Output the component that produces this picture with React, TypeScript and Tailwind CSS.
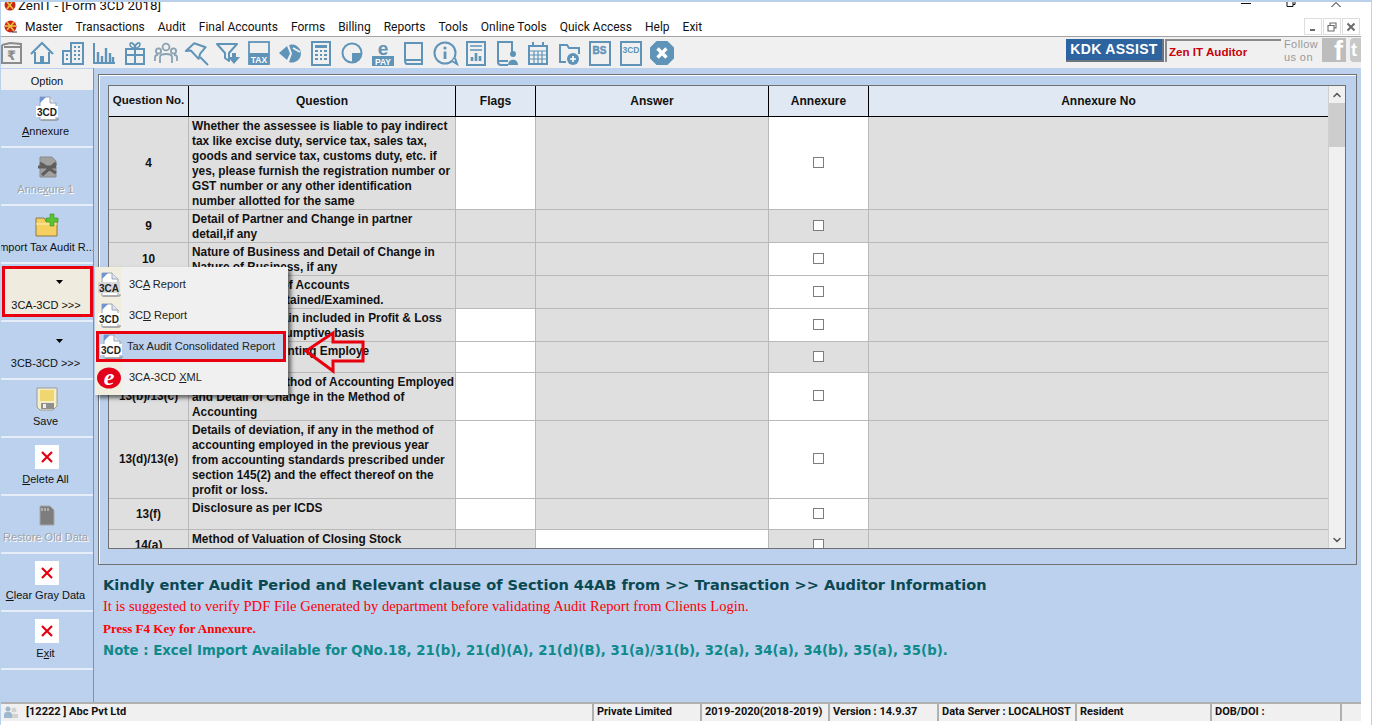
import React from "react";
import { ChevronDown, ChevronUp } from "lucide-react";

const BLUE = "#5f94b8";

const Ico = ({ children, w = 24 }: { children: React.ReactNode; w?: number }) => (
  <svg width={w} height="26" viewBox={`0 0 ${w} 26`} fill="none" stroke={BLUE} strokeWidth="2" className="shrink-0 overflow-visible">
    {children}
  </svg>
);

const toolbarIcons: React.ReactNode[] = [
  <Ico w={22} key="wallet">
    <path d="M1 5 L9 3 L20 4 V7 M1 5 V23 H20 V7 H3" stroke="#8b8b8b" />
    <text x="6" y="20" fontSize="13" fontWeight="700" fill="#8b8b8b" stroke="none" fontFamily="DejaVu Sans">₹</text>
  </Ico>,
  <Ico key="home">
    <path d="M1 14 L12 3 L23 14" />
    <path d="M5 12 V23 H19 V12" />
    <rect x="10" y="16" width="4" height="7" fill={BLUE} stroke="none" />
  </Ico>,
  <Ico key="building">
    <rect x="10" y="3" width="12" height="21" />
    <rect x="2" y="11" width="8" height="13" />
    <path d="M13 7h2M17 7h2M13 11h2M17 11h2M13 15h2M17 15h2M13 19h2M17 19h2M5 15h2M5 19h2" />
  </Ico>,
  <Ico key="bars">
    <path d="M2 3 V23 H23" />
    <path d="M6 12 V22M10 16 V22M14 8 V22M18 13 V22M21 17 V22" strokeWidth="2.4" />
  </Ico>,
  <Ico key="gift">
    <rect x="3" y="9" width="18" height="15" />
    <path d="M3 15 H21 M12 9 V24" />
    <path d="M12 8 C6 8 6 2 9 3 C11 4 12 6 12 8 C12 6 13 4 15 3 C18 2 18 8 12 8 Z" strokeWidth="1.6" />
  </Ico>,
  <Ico key="users">
    <g stroke="#8aa2b2" strokeWidth="1.8">
      <circle cx="12" cy="7" r="3.4" />
      <circle cx="4.5" cy="11" r="2.6" />
      <circle cx="19.5" cy="11" r="2.6" />
      <path d="M6 23 V17 C6 13 18 13 18 17 V23" />
      <path d="M1 21 V17 C1 15 3 15 4 15 M23 21 V17 C23 15 21 15 20 15" />
    </g>
  </Ico>,
  <Ico key="pin">
    <path d="M10 3 L1 10 L6 10 L13 19 L15 14 L21 8 Z" strokeLinejoin="round" transform="rotate(-5 12 12)" />
    <path d="M15 17 L23 25" />
  </Ico>,
  <Ico key="filter">
    <path d="M1 4 H21 L13 13 V21 L9 18 V13 Z" strokeLinejoin="round" />
    <path d="M16 13 h4 v4 h4 l-6 7 l-6 -7 h4 Z" fill={BLUE} stroke="none" />
  </Ico>,
  <Ico key="tax">
    <rect x="2" y="2" width="20" height="22" strokeWidth="1.8" />
    <rect x="2" y="13" width="20" height="12" fill={BLUE} stroke="none" />
    <text x="12" y="23" textAnchor="middle" fontSize="8.5" fontWeight="700" fill="#fff" stroke="none" fontFamily="Liberation Sans">TAX</text>
  </Ico>,
  <Ico key="pie">
    <path d="M11 5 A9 9 0 1 1 11 22 L14 13.5 Z" fill={BLUE} stroke="none" />
    <path d="M9 6 L1 13 L9 20 L12 13.5 Z" fill={BLUE} stroke="none" />
    <path d="M15 8 L22 12" stroke="#f0f0f0" />
  </Ico>,
  <Ico key="calc">
    <rect x="3" y="2" width="18" height="23" />
    <rect x="6" y="5" width="12" height="3" fill={BLUE} stroke="none" />
    <path d="M6 11h3M11 11h2M15 11h3M6 15h3M11 15h2M15 15h3M6 19h3M11 19h2M15 19h3" />
  </Ico>,
  <Ico key="circle-pie">
    <circle cx="12" cy="13" r="9.5" />
    <path d="M12 13 V22 A9.5 9.5 0 0 0 21.5 13 Z" fill={BLUE} stroke="none" />
  </Ico>,
  <Ico key="epay">
    <text x="12" y="15" textAnchor="middle" fontSize="19" fontWeight="700" fill={BLUE} stroke="none" fontFamily="Liberation Sans">e</text>
    <rect x="1" y="16" width="22" height="10" fill={BLUE} stroke="none" />
    <text x="12" y="24.5" textAnchor="middle" fontSize="8.5" fontWeight="700" fill="#fff" stroke="none" fontFamily="Liberation Sans">PAY</text>
  </Ico>,
  <Ico key="book">
    <path d="M5 24 C3 24 3 21 3 20 V3 H20 V24 Z" />
    <path d="M3 20 H20" />
  </Ico>,
  <Ico key="info">
    <circle cx="12" cy="13" r="10.5" />
    <path d="M19 21 L24 24 L22 18" fill="#f0f0f0" />
    <circle cx="12" cy="8" r="1.6" fill={BLUE} stroke="none" />
    <path d="M12 11.5 V19" strokeWidth="2.8" />
  </Ico>,
  <Ico key="report">
    <rect x="3" y="2" width="18" height="23" />
    <path d="M6 6 H18 M6 10 H18" strokeWidth="1.6" />
    <path d="M8 21 V17 M12 21 V13 M16 21 V16" strokeWidth="2.6" />
  </Ico>,
  <Ico key="book-user">
    <path d="M17 14 V2 H3 V22 C3 24 4 25 6 25 H13" />
    <path d="M3 21 H13" />
    <circle cx="18" cy="14" r="3" fill={BLUE} stroke="none" />
    <path d="M13 25 C13 18 23 18 23 25 Z" fill={BLUE} stroke="none" />
  </Ico>,
  <Ico key="calendar">
    <rect x="3" y="6" width="18" height="18" />
    <path d="M7 2 V7 M17 2 V7" />
    <path d="M3 11 H21 M3 15 H21 M3 19 H21 M8 11 V24 M12 11 V24 M16 11 V24" strokeWidth="1.2" />
  </Ico>,
  <Ico key="folder-plus">
    <path d="M9 22 H3 V5 H10 L12 8 H22 V14" />
    <circle cx="16" cy="19" r="6" fill={BLUE} stroke="none" />
    <path d="M13 19 H19 M16 16 V22" stroke="#fff" strokeWidth="1.6" />
  </Ico>,
  <Ico key="bs">
    <rect x="2" y="2" width="20" height="23" />
    <text x="11.5" y="14" textAnchor="middle" fontSize="10" fontWeight="700" fill={BLUE} stroke="#5f94b8" strokeWidth=".4" fontFamily="Liberation Sans">BS</text>
  </Ico>,
  <Ico key="3cd">
    <rect x="2" y="2" width="20" height="23" />
    <text x="12" y="13" textAnchor="middle" fontSize="8.5" fontWeight="700" fill={BLUE} stroke="none" fontFamily="Liberation Sans">3CD</text>
  </Ico>,
  <Ico key="close">
    <path d="M7 2 H17 L23 8 V18 L17 24 H7 L1 18 V8 Z" fill={BLUE} stroke={BLUE} strokeLinejoin="round" />
    <path d="M7.5 8.5 L16.5 17.5 M16.5 8.5 L7.5 17.5" stroke="#fff" strokeWidth="3.4" />
  </Ico>,
];

const menus = ["Master", "Transactions", "Audit", "Final Accounts", "Forms", "Billing", "Reports", "Tools", "Online Tools", "Quick Access", "Help", "Exit"];

type Row = {
  no: string;
  q: string;
  h: string;
  flags?: boolean;
  answer?: boolean;
  annexure?: boolean;
};

const rows: Row[] = [
  {
    no: "4",
    q: "Whether the assessee is liable to pay indirect tax like excise duty, service tax, sales tax, goods and service tax, customs duty, etc. if yes, please furnish the registration number or GST number or any other identification number allotted for the same",
    h: "h-[93px]",
    flags: true,
    annexure: true,
  },
  { no: "9", q: "Detail of Partner and Change in partner detail,if any", h: "h-[33px]" },
  { no: "10", q: "Nature of Business and Detail of Change in Nature of Business, if any", h: "h-[33px]", annexure: true },
  { no: "11", q: "Detail of Books of Accounts\nand Papers Maintained/Examined.", h: "h-[33px]", annexure: true },
  { no: "12", q: "Detail of Total Gain included in Profit & Loss\nAccount on presumptive basis", h: "h-[33px]", flags: true, annexure: true },
  { no: "13(a)", q: "Method of Accounting Employe", h: "h-[31px]", flags: true },
  { no: "13(b)/13(c)", q: "Details of the Method of Accounting Employed and Detail of Change in the Method of Accounting", h: "h-[48px]", flags: true, annexure: true },
  {
    no: "13(d)/13(e)",
    q: "Details of deviation, if any in the method of accounting employed in the previous year from accounting standards prescribed under section 145(2) and the effect thereof on the profit or loss.",
    h: "h-[78px]",
    flags: true,
    annexure: true,
  },
  { no: "13(f)", q: "Disclosure as per ICDS", h: "h-[31px]", flags: true, annexure: true },
  { no: "14(a)", q: "Method of Valuation of Closing Stock", h: "h-[31px]", answer: true },
];

const DocIcon = ({ label = "3CD", shade = "#fff" }: { label?: string; shade?: string }) => (
  <svg width="24" height="26" viewBox="0 0 24 26" className="shrink-0">
    <path d="M5 1 H15 L21 7 V24 H5 Z" fill="#fff" stroke="#9aa3b5" />
    <path d="M5 1 L5 7 L11 1 Z" fill="#6f93d6" />
    <path d="M15 1 V7 H21" fill="#dfe5f0" stroke="#9aa3b5" />
    <rect x="1" y="10" width="22" height="11" fill={shade} />
    <text x="12" y="19.5" textAnchor="middle" fontSize="10" fontWeight="700" fill="#222" fontFamily="Liberation Sans">
      {label}
    </text>
    <path d="M6 24 H23 V22" stroke="#8c8c8c" fill="none" />
  </svg>
);

const XIcon = () => (
  <div className="w-6 h-6 bg-white flex items-center justify-center">
    <svg width="14" height="14" viewBox="0 0 14 14">
      <path d="M2 2 L12 12 M12 2 L2 12" stroke="#e3000f" strokeWidth="2.2" />
    </svg>
  </div>
);

const Caret = () => (
  <svg width="7" height="4" viewBox="0 0 7 4" className="ml-[24px]">
    <path d="M0 0 H7 L3.5 4 Z" fill="#000" />
  </svg>
);

function SideButton({ icon, children, disabled }: { icon: React.ReactNode; children: React.ReactNode; disabled?: boolean }) {
  return (
    <div className="h-[58px] border-b-2 border-[#e6edf6] pt-[4px] flex flex-col items-center overflow-hidden">
      <div className="h-[30px] flex items-center justify-center shrink-0">{icon}</div>
      <div className={`pr-[3px] text-[11px] leading-[14px] whitespace-nowrap ${disabled ? "text-[#a3a3a3] [text-shadow:1px_1px_0_#fff]" : "text-[#111]"}`}>
        {children}
      </div>
    </div>
  );
}

const PopupItem = ({ icon, children, active }: { icon: React.ReactNode; children: React.ReactNode; active?: boolean }) => (
  <div className={`h-[31px] flex items-center ${active ? "bg-[#bdd0ec] border-[3px] border-[#e8000f] -ml-[1px] w-[190px]" : ""}`}>
    <div className={`${active ? "w-[28px]" : "w-[32px]"} flex justify-start shrink-0`}>{icon}</div>
    <span className="text-[11px] text-[#222] whitespace-nowrap">{children}</span>
  </div>
);

export default function App() {
  return (
    <div className="w-[1372px] h-[725px] bg-white flex flex-col overflow-hidden relative border-t-2 border-x border-[#b9d1ea] [font-family:'Liberation_Sans',sans-serif]">
      {/* title bar */}
      <div className="h-[15px] shrink-0 flex overflow-hidden pr-[30px]">
        <svg width="12" height="10" viewBox="0 0 12 10" className="ml-[3px] shrink-0">
          <circle cx="6" cy="3" r="5.5" fill="#c9261c" />
          <path d="M3 0 L9 7 M8 0 L3 7" stroke="#e9c23b" strokeWidth="1.6" />
        </svg>
        <span className="ml-[2px] text-[13.3px] leading-[7px] text-[#111] [font-family:Roboto,sans-serif]">ZenIT - [Form 3CD 2018]</span>
        <div className="ml-auto flex gap-[35px]">
          <svg width="10" height="5" viewBox="0 0 10 5"><path d="M0 1.5 H10" stroke="#111" /></svg>
          <svg width="10" height="5" viewBox="0 0 10 5"><path d="M1 0 V4.5 H7 V0 M9 0 V2.5 H7" stroke="#111" fill="none" /></svg>
          <svg width="10" height="5" viewBox="0 0 10 5"><path d="M0.5 5 L5 0.5 L9.5 5" stroke="#111" fill="none" /></svg>
        </div>
      </div>

      {/* menu bar */}
      <div className="h-[19px] shrink-0 flex items-center pr-[11px]">
        <svg width="13" height="13" viewBox="0 0 13 13" className="ml-[3px] shrink-0">
          <circle cx="6.5" cy="6.5" r="6" fill="#c9261c" />
          <path d="M3 2 L10 11 M10 2 L3 10 M1 6 L12 6" stroke="#e9c23b" strokeWidth="1.5" />
          <path d="M8 12 H13" stroke="#333" />
        </svg>
        <div className="ml-[8px] flex gap-[13px] text-[12px] text-[#111] [font-family:Roboto,sans-serif]">
          {menus.map((m) => (
            <span key={m}>{m}</span>
          ))}
        </div>
        <div className="ml-auto flex gap-[1px]">
          {["min", "restore", "close"].map((k) => (
            <div key={k} className="w-[18px] h-[17px] border border-[#dedede] flex items-center justify-center">
              <svg width="10" height="10" viewBox="0 0 10 10" fill="none" stroke="#6b6b6b" strokeWidth="1.5">
                {k === "min" && <path d="M2 8 H7" strokeWidth="2" />}
                {k === "restore" && <path d="M3 3 V1 H9 V6 H7 M1 3.5 H7 V9 H1 Z" strokeWidth="1.1" />}
                {k === "close" && <path d="M1.5 1.5 L8.5 8.5 M8.5 1.5 L1.5 8.5" strokeWidth="2" />}
              </svg>
            </div>
          ))}
        </div>
      </div>

      {/* toolbar */}
      <div className="h-[32px] shrink-0 mr-[10px] bg-[#f0f0f0] border-t border-[#a3a3a3] flex items-center relative">
        <div className="flex gap-[7px] items-center">{toolbarIcons}</div>
        <div className="ml-auto flex items-start h-full pt-px">
          <div className="mt-px w-[98px] h-[23px] bg-[#2d64a0] border-r-2 border-b-2 border-[#6c7480] text-white font-bold text-[14px] tracking-[0.3px] whitespace-nowrap flex items-center justify-center">
            KDK ASSIST
          </div>
          <div className="mt-px ml-[1px] w-[116px] h-[23px] border-l-2 border-t-2 border-[#8a8a8a] bg-[#f0f0f0] text-[#c8000c] font-bold text-[11.6px] pl-[2px] flex items-center">
            Zen IT Auditor
          </div>
          <div className="ml-[3px] w-[38px] text-[11px] leading-[13px] text-[#9a9a9a] tracking-[0.4px]">
            Follow us on
          </div>
          <div className="w-[24px] h-[24px] bg-[#bdbdbd] flex items-end justify-end overflow-hidden">
            <span className="text-white font-bold text-[27px] leading-[24px] pr-[3px] translate-y-[1px]">f</span>
          </div>
          <div className="ml-[4px] w-[11px] h-[24px] bg-[#c8c8c8] rounded-l-[4px] text-white font-bold text-[18px] leading-[24px] pl-[1px] overflow-hidden">
            t
          </div>
        </div>
      </div>

      {/* body */}
      <div className="flex-1 min-h-0 flex mr-[10px]">
        {/* option sidebar */}
        <div className="w-[93px] shrink-0 bg-[#bbd1ed] border-r border-[#8f8f8f] pt-px flex flex-col">
          <div className="h-[21px] pt-[3px] bg-[#f0f0f0] text-[11px] text-[#111] flex items-center justify-center">Option</div>
          <SideButton icon={<DocIcon />}>
            <u>A</u>nnexure
          </SideButton>
          <SideButton
            disabled
            icon={
              <svg width="22" height="24" viewBox="0 0 22 24">
                <path d="M4 2 H16 L20 6 V22 H4 Z" fill="#a0a0a0" stroke="#8a8a8a" />
                <path d="M4 8 L20 18 M20 8 L6 20 M2 12 H20" stroke="#5e5e5e" strokeWidth="3" />
              </svg>
            }
          >
            Anne<u>x</u>ure 1
          </SideButton>
          <SideButton
            icon={
              <svg width="24" height="24" viewBox="0 0 24 24">
                <path d="M1 5 H9 L11 8 H22 V23 H1 Z" fill="#f5cf5f" stroke="#8a7a4a" />
                <path d="M1 11 H22" stroke="#fff3c4" />
                <path d="M15 1 H19 V5 H23 V9 H19 V13 H15 V9 H11 V5 H15 Z" fill="#5bc236" stroke="#3b8f22" strokeWidth=".6" />
              </svg>
            }
          >
            Import Tax Audit R...
          </SideButton>
          <div className="h-[58px] border-b-2 border-[#e6edf6] pt-[2px] pl-px">
            <div className="w-[91px] h-[51px] bg-[#efecdf] border-[3px] border-[#e8000f] pt-[8px] flex flex-col items-center">
              <div className="h-[10px] flex items-center">
                <Caret />
              </div>
              <div className="mt-[11px] pr-[3px] text-[11px] leading-[14px] text-[#111] whitespace-nowrap">3CA-3CD &gt;&gt;&gt;</div>
            </div>
          </div>
          <SideButton icon={<Caret />}>3CB-3CD &gt;&gt;&gt;</SideButton>
          <SideButton
            icon={
              <svg width="22" height="24" viewBox="0 0 22 24">
                <path d="M1 1 H21 V19 L17 23 H4 L1 20 Z" fill="#f5efc9" stroke="#9a9a9a" />
                <rect x="4" y="3" width="14" height="11" fill="#f0d66e" />
                <rect x="5" y="16" width="13" height="6" fill="#8f8f8f" />
                <rect x="7" y="17" width="3" height="4" fill="#eee" />
              </svg>
            }
          >
            Save
          </SideButton>
          <SideButton icon={<XIcon />}>
            <u>D</u>elete All
          </SideButton>
          <SideButton
            disabled
            icon={
              <svg width="16" height="21" viewBox="0 0 16 21">
                <path d="M1 1 H11 L15 5 V20 H1 Z" fill="#7d7d7d" stroke="#a8a8a8" />
                <path d="M3 3 V6 M6 3 V6 M9 3 V6" stroke="#e0e0e0" />
              </svg>
            }
          >
            Restore Old Data
          </SideButton>
          <SideButton icon={<XIcon />}>
            <u>C</u>lear Gray Data
          </SideButton>
          <SideButton icon={<XIcon />}>
            E<u>x</u>it
          </SideButton>
        </div>

        {/* main */}
        <div className="flex-1 min-w-0 bg-[#bbd1ed] pt-[6px] px-[4px] flex flex-col">
          <div className="h-[491px] shrink-0 border border-[#707070] shadow-[inset_1px_1px_0_#fff] pt-[10px] pl-[9px] pr-[10px] pb-[15px]">
            <div className="h-full border border-[#707070] flex bg-[#f0f0f0]">
              <div className="flex-1 min-w-0 overflow-hidden">
                <div className="grid grid-cols-[80px_267px_80px_233px_100px_1fr] h-[31px] bg-[#dfe8f3] border-b border-black font-bold text-[#111]">
                  {["Question No.", "Question", "Flags", "Answer", "Annexure", "Annexure No"].map((h, i) => (
                    <div key={h} className={`flex items-center justify-center whitespace-nowrap ${i === 0 ? "text-[11.5px]" : "text-[12px]"} ${i < 5 ? "border-r border-black" : ""}`}>
                      {h}
                    </div>
                  ))}
                </div>
                {rows.map((r) => (
                  <div key={r.no} className={`grid grid-cols-[80px_267px_80px_233px_100px_1fr] ${r.h} border-b border-[#b9b9b9] text-[11.85px] font-bold leading-[15px] text-[#111] bg-[#dfdfdf]`}>
                    <div className="border-r border-[#b9b9b9] flex items-center justify-center">{r.no}</div>
                    <div className="border-r border-[#b9b9b9] pl-[3px] pt-[2px] whitespace-pre-line">{r.q}</div>
                    <div className={`border-r border-[#b9b9b9] ${r.flags ? "bg-white" : ""}`} />
                    <div className={`border-r border-[#b9b9b9] ${r.answer ? "bg-white" : ""}`} />
                    <div className={`border-r border-[#b9b9b9] pb-[2px] flex items-center justify-center ${r.annexure ? "bg-white" : ""}`}>
                      <div className="w-[11px] h-[11px] border border-[#7d7d7d] bg-white" />
                    </div>
                    <div />
                  </div>
                ))}
              </div>
              <div className="w-[17px] shrink-0 border-l border-[#cfcfcf] flex flex-col items-center">
                <div className="h-[17px] flex items-center justify-center">
                  <ChevronUp size={12} strokeWidth={3} className="text-[#555]" />
                </div>
                <div className="h-[44px] w-full bg-[#cdcdcd]" />
                <div className="mt-auto h-[17px] flex items-center justify-center">
                  <ChevronDown size={12} strokeWidth={3} className="text-[#555]" />
                </div>
              </div>
            </div>
          </div>
          <div className="pl-[5px] pt-[10px]">
            <div className="text-[14.54px] leading-[20px] font-bold text-[#0a4852] whitespace-nowrap [font-family:'DejaVu_Sans',sans-serif]">
              Kindly enter Audit Period and Relevant clause of Section 44AB from &gt;&gt; Transaction &gt;&gt; Auditor Information
            </div>
            <div className="mt-[1px] text-[14.58px] leading-[20px] text-[#ff0000] whitespace-nowrap [font-family:'Liberation_Serif',serif]">
              It is suggested to verify PDF File Generated by department before validating Audit Report from Clients Login.
            </div>
            <div className="mt-[4px] text-[13px] leading-[18px] font-bold text-[#ff0000] whitespace-nowrap [font-family:'Liberation_Serif',serif]">
              Press F4 Key for Annexure.
            </div>
            <div className="mt-[3px] text-[13.3px] leading-[20px] font-bold text-[#0f8a8a] whitespace-nowrap [font-family:'DejaVu_Sans',sans-serif]">
              Note : Excel Import Available for QNo.18, 21(b), 21(d)(A), 21(d)(B), 31(a)/31(b), 32(a), 34(a), 34(b), 35(a), 35(b).
            </div>
          </div>
        </div>
      </div>

      {/* status bar */}
      <div className="h-[19px] shrink-0 mb-[4px] mr-[10px] bg-[#f0f0f0] border-t-2 border-[#b0b0b0] flex text-[11px] font-bold text-[#111] leading-[15px] whitespace-nowrap [font-family:Roboto,sans-serif]">
        <div className="w-[591px] flex items-center gap-[8px] pl-[3px] pb-[2px]">
          <svg width="14" height="14" viewBox="0 0 14 14" fill="#9fb8cc">
            <circle cx="4" cy="4" r="2.5" />
            <circle cx="10" cy="5" r="2.5" fill="#d2d2d2" />
            <path d="M0 13 V9 C1 6 7 6 8 9 V13 Z" />
            <path d="M8 13 V9 H14 V13 Z" fill="#d2d2d2" />
          </svg>
          <span>[12222 ] Abc Pvt Ltd</span>
        </div>
        <div className="w-[108px] border-l-2 border-[#b0b0b0] pl-[3px]">Private Limited</div>
        <div className="w-[128px] border-l-2 border-[#b0b0b0] pl-[3px]">2019-2020(2018-2019)</div>
        <div className="w-[109px] border-l-2 border-[#b0b0b0] pl-[3px]">Version : 14.9.37</div>
        <div className="w-[138px] border-l-2 border-[#b0b0b0] pl-[3px]">Data Server : LOCALHOST</div>
        <div className="w-[135px] border-l-2 border-[#b0b0b0] pl-[3px]">Resident</div>
        <div className="w-[132px] border-l-2 border-r-2 border-[#b0b0b0] pl-[3px]">DOB/DOI :</div>
      </div>

      {/* 3CA-3CD dropdown */}
      <div className="absolute left-[94px] top-[265px] w-[193px] h-[128px] bg-[#f0f0f0] shadow-[3px_3px_4px_rgba(0,0,0,0.55)] flex flex-col pt-[2px] pl-[2px]">
        <div className="absolute left-0 top-0 bottom-0 w-[26px] bg-[#f1eee0]" />
        <div className="relative flex flex-col">
          <PopupItem icon={<DocIcon label="3CA" shade="#d8d8d8" />}>
            3C<u>A</u> Report
          </PopupItem>
          <PopupItem icon={<DocIcon />}>
            3C<u>D</u> Report
          </PopupItem>
          <PopupItem active icon={<DocIcon />}>
            Tax Audit Consolidated Report
          </PopupItem>
          <PopupItem
            icon={
              <svg width="24" height="24" viewBox="0 0 24 24">
                <ellipse cx="12" cy="12" rx="12" ry="10.5" fill="#e3001b" />
                <text x="12" y="19" textAnchor="middle" fontSize="24" fontWeight="700" fontStyle="italic" fill="#fff" fontFamily="Liberation Serif">e</text>
              </svg>
            }
          >
            3CA-3CD <u>X</u>ML
          </PopupItem>
        </div>
      </div>

      {/* callout arrow */}
      <svg width="62" height="44" viewBox="0 0 62 44" fill="none" className="absolute left-[303px] top-[328px]">
        <path d="M2 21 L29 3 V12 H59 V31 H29 V41 Z" stroke="#e8000f" strokeWidth="3" strokeLinejoin="miter" />
      </svg>
    </div>
  );
}
